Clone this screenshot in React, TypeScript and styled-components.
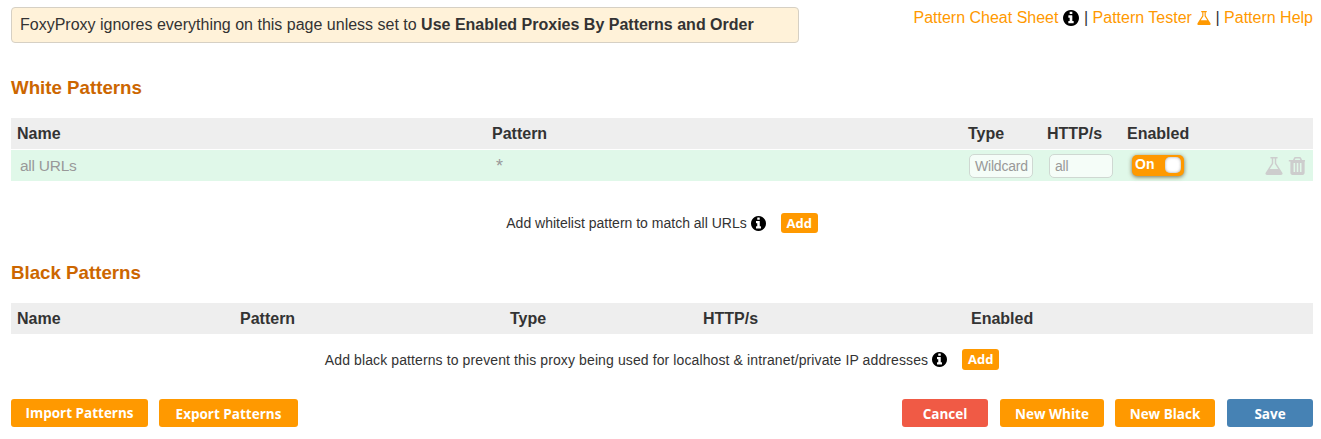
import React from "react";
import styled, { createGlobalStyle } from "styled-components";

const Global = createGlobalStyle`
  html, body { margin: 0; padding: 0; background: #fff; }
  body { font-family: "Liberation Sans", Arial, sans-serif; color: #333; }
`;

const Page = styled.div`
  width: 1321px;
  height: 439px;
  box-sizing: border-box;
  padding: 7px 8px 0 11px;
  overflow: hidden;
`;

const TopBar = styled.div`
  display: flex;
  justify-content: space-between;
  align-items: flex-start;
  height: 36px;
`;

const Notice = styled.div`
  box-sizing: border-box;
  width: 788px;
  height: 36px;
  line-height: 34px;
  padding: 0 8px;
  font-size: 16px;
  background: #fff2d9;
  border: 1px solid #d6d0c4;
  border-radius: 4px;
`;

const Links = styled.div`
  font-size: 16px;
  line-height: 20px;
  margin-top: 1px;
  display: flex;
  align-items: center;
  gap: 4.5px;
`;

const HelpLink = styled.a`
  color: #ff9900;
  display: inline-flex;
  align-items: center;
  gap: 5px;
`;

const Heading = styled.h2<{ $top: number }>`
  margin: 0;
  font-size: 18.72px;
  line-height: 20px;
  font-weight: bold;
  color: #cc6600;
  padding-top: ${(p) => p.$top}px;
`;

const HeadRow = styled.div<{ $cols: string; $top: number }>`
  display: grid;
  grid-template-columns: ${(p) => p.$cols};
  margin-top: ${(p) => p.$top}px;
  height: 31px;
  line-height: 31px;
  background: #eeeeee;
  font-size: 16px;
  font-weight: bold;
  padding-left: 6px;
`;

const DataRow = styled.div`
  display: grid;
  grid-template-columns: 472px 486px 80px 79px 136px 1fr;
  align-items: center;
  margin-top: 1px;
  height: 31px;
  background: #e0f8e9;
  color: #999;
  font-size: 16px;
`;

const NameCell = styled.span`
  padding-left: 9px;
  padding-top: 1px;
  font-size: 15.5px;
  letter-spacing: -0.25px;
`;

const PatternCell = styled.span`
  padding-left: 13px;
  padding-top: 1px;
  font-size: 18px;
`;

const FakeInput = styled.span`
  box-sizing: border-box;
  display: block;
  width: 64px;
  height: 24px;
  line-height: 23px;
  padding-left: 5px;
  font-size: 14px;
  letter-spacing: -0.2px;
  color: #999;
  background: #f5fdf8;
  border: 1px solid #cfd8d2;
  border-radius: 5px;
`;

const Toggle = styled.span`
  position: relative;
  display: block;
  box-sizing: border-box;
  width: 52px;
  height: 21px;
  margin-left: 4px;
  border-radius: 5px;
  background: #ff9900;
  color: #fff;
  font-weight: bold;
  font-size: 14px;
  line-height: 18px;
  padding-left: 3px;
  box-shadow: 0 1px 4px rgba(90, 70, 30, 0.75);
`;

const Knob = styled.span`
  position: absolute;
  right: 3px;
  top: 2px;
  width: 16px;
  height: 16px;
  border-radius: 5px;
  background: #fff;
  box-shadow: inset 0 0 3px rgba(120, 120, 120, 0.7);
`;

const RowIcons = styled.span`
  display: flex;
  align-items: center;
  justify-content: flex-end;
  gap: 5px;
  padding-right: 8px;
  color: #cdcdcd;
`;

const AddRow = styled.div<{ $top: number; $tracking: number; $h: number }>`
  display: flex;
  justify-content: center;
  align-items: center;
  gap: 15px;
  margin-top: ${(p) => p.$top}px;
  height: ${(p) => p.$h}px;
  font-size: 14px;
  letter-spacing: ${(p) => p.$tracking}px;
`;

const AddText = styled.span`
  display: inline-flex;
  align-items: center;
  gap: 4px;
`;

const AddButton = styled.span`
  display: block;
  box-sizing: border-box;
  width: 37px;
  height: 100%;
  line-height: 21px;
  letter-spacing: 0;
  text-align: center;
  background: #ff9900;
  color: #fff;
  font-family: "Open Sans", sans-serif;
  font-size: 13px;
  font-weight: bold;
  border-radius: 3px;
`;

const Footer = styled.div`
  display: flex;
  justify-content: space-between;
  margin-top: 29px;
`;

const Group = styled.div`
  display: flex;
  gap: 11px;
`;

const Btn = styled.span<{ $w: number; $bg: string; $after?: number; $lh?: number }>`
  display: block;
  box-sizing: border-box;
  width: ${(p) => p.$w}px;
  height: 28px;
  line-height: ${(p) => p.$lh ?? 30}px;
  margin-right: ${(p) => p.$after ?? 0}px;
  text-align: center;
  border-radius: 3px;
  background: ${(p) => p.$bg};
  color: #fff;
  font-family: "Open Sans", sans-serif;
  font-weight: bold;
  font-size: 13.5px;
`;

const Glyph = styled.svg<{ $color?: string }>`
  display: block;
  flex: none;
  fill: ${(p) => p.$color ?? "currentColor"};
  fill-rule: evenodd;
`;

const INFO =
  "M1152 1376v-160q0-14-9-23t-23-9h-96v-512q0-14-9-23t-23-9h-320q-14 0-23 9t-9 23v160q0 14 9 23t23 9h96v320h-96q-14 0-23 9t-9 23v160q0 14 9 23t23 9h448q14 0 23-9t9-23zm-128-896v-160q0-14-9-23t-23-9h-192q-14 0-23 9t-9 23v160q0 14 9 23t23 9h192q14 0 23-9t9-23zm640 416q0 209-103 385.5t-279.5 279.5-385.5 103-385.5-103-279.5-279.5-103-385.5 103-385.5 279.5-279.5 385.5-103 385.5 103 279.5 279.5 103 385.5z";
const FLASK =
  "M1591 1448q56 89 21.5 152.5t-140.5 63.5h-1152q-106 0-140.5-63.5t21.5-152.5l503-793v-399h-64q-26 0-45-19t-19-45 19-45 45-19h512q26 0 45 19t19 45-19 45-45 19h-64v399zm-779-725l-272 429h712l-272-429-20-31v-436h-128v436z";
const TRASH =
  "M704 1376v-704q0-14-9-23t-23-9h-64q-14 0-23 9t-9 23v704q0 14 9 23t23 9h64q14 0 23-9t9-23zm256 0v-704q0-14-9-23t-23-9h-64q-14 0-23 9t-9 23v704q0 14 9 23t23 9h64q14 0 23-9t9-23zm256 0v-704q0-14-9-23t-23-9h-64q-14 0-23 9t-9 23v704q0 14 9 23t23 9h64q14 0 23-9t9-23zm-544-992h448l-48-117q-7-9-17-11h-317q-10 2-17 11zm928 32v64q0 14-9 23t-23 9h-96v948q0 83-47 143.5t-113 60.5h-832q-66 0-113-58.5t-47-141.5v-952h-96q-14 0-23-9t-9-23v-64q0-14 9-23t23-9h309l70-167q15-37 54-63t79-26h320q40 0 79 26t54 63l70 167h309q14 0 23 9t9 23z";

const InfoIcon = ({ size }: { size: number }) => (
  <Glyph viewBox="128 128 1536 1536" width={size} height={size} $color="#000">
    <path d={INFO} />
  </Glyph>
);

const FlaskIcon = ({ size }: { size: number }) => (
  <Glyph viewBox="128 128 1536 1536" width={size} height={size}>
    <path d={FLASK} />
  </Glyph>
);

const TrashIcon = ({ size }: { size: number }) => (
  <Glyph viewBox="128 128 1408 1536" width={size * 0.97} height={size} preserveAspectRatio="none">
    <path d={TRASH} />
  </Glyph>
);

const orange = "#ff9900";

export default function App() {
  return (
    <Page>
      <Global />
      <TopBar>
        <Notice>
          FoxyProxy ignores everything on this page unless set to <b>Use Enabled Proxies By Patterns and Order</b>
        </Notice>
        <Links>
          <HelpLink>Pattern Cheat Sheet<InfoIcon size={16} /></HelpLink>
          <span>|</span>
          <HelpLink>Pattern Tester<FlaskIcon size={14} /></HelpLink>
          <span>|</span>
          <HelpLink>Pattern Help</HelpLink>
        </Links>
      </TopBar>

      <Heading $top={35}>White Patterns</Heading>
      <HeadRow $top={20} $cols="475px 476px 79px 80px 1fr">
        <span>Name</span>
        <span>Pattern</span>
        <span>Type</span>
        <span>HTTP/s</span>
        <span>Enabled</span>
      </HeadRow>
      <DataRow>
        <NameCell>all URLs</NameCell>
        <PatternCell>*</PatternCell>
        <FakeInput>Wildcard</FakeInput>
        <FakeInput>all</FakeInput>
        <Toggle>
          On
          <Knob />
        </Toggle>
        <RowIcons>
          <FlaskIcon size={18} />
          <TrashIcon size={18} />
        </RowIcons>
      </DataRow>
      <AddRow $top={32} $tracking={0} $h={20}>
        <AddText>
          Add whitelist pattern to match all URLs<InfoIcon size={15} />
        </AddText>
        <AddButton>Add</AddButton>
      </AddRow>

      <Heading $top={30}>Black Patterns</Heading>
      <HeadRow $top={20} $cols="223px 270px 193px 268px 1fr">
        <span>Name</span>
        <span>Pattern</span>
        <span>Type</span>
        <span>HTTP/s</span>
        <span>Enabled</span>
      </HeadRow>
      <AddRow $top={15} $tracking={0.11} $h={21}>
        <AddText>
          Add black patterns to prevent this proxy being used for localhost &amp; intranet/private IP addresses<InfoIcon size={15} />
        </AddText>
        <AddButton>Add</AddButton>
      </AddRow>

      <Footer>
        <Group>
          <Btn $w={137} $bg={orange} $lh={29}>Import Patterns</Btn>
          <Btn $w={139} $bg={orange}>Export Patterns</Btn>
        </Group>
        <Group>
          <Btn $w={86} $bg="#f05a45" $after={1}>Cancel</Btn>
          <Btn $w={104} $bg={orange}>New White</Btn>
          <Btn $w={100} $bg={orange} $after={1}>New Black</Btn>
          <Btn $w={86} $bg="#4682b4">Save</Btn>
        </Group>
      </Footer>
    </Page>
  );
}
